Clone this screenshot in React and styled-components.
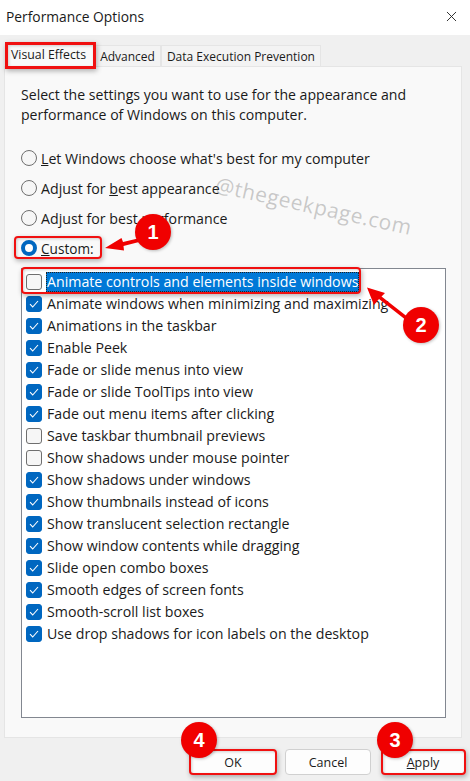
import styled, { createGlobalStyle } from "styled-components";
import { X } from "lucide-react";

const GlobalStyle = createGlobalStyle`
	html, body {
		margin: 0;
		padding: 0;
		background: #f0f0f0;
	}
	* {
		box-sizing: border-box;
	}
`;

const options = [
	{ label: "Animate controls and elements inside windows", checked: false, selected: true },
	{ label: "Animate windows when minimizing and maximizing", checked: true },
	{ label: "Animations in the taskbar", checked: true },
	{ label: "Enable Peek", checked: true },
	{ label: "Fade or slide menus into view", checked: true },
	{ label: "Fade or slide ToolTips into view", checked: true },
	{ label: "Fade out menu items after clicking", checked: true },
	{ label: "Save taskbar thumbnail previews", checked: false },
	{ label: "Show shadows under mouse pointer", checked: false },
	{ label: "Show shadows under windows", checked: true },
	{ label: "Show thumbnails instead of icons", checked: true },
	{ label: "Show translucent selection rectangle", checked: true },
	{ label: "Show window contents while dragging", checked: true },
	{ label: "Slide open combo boxes", checked: true },
	{ label: "Smooth edges of screen fonts", checked: true },
	{ label: "Smooth-scroll list boxes", checked: true },
	{ label: "Use drop shadows for icon labels on the desktop", checked: true },
];

const App = () => {
	return (
		<Dialog>
			<GlobalStyle />
			<TitleBar>
				<Title>Performance Options</Title>
				<X size={17} strokeWidth={1.3} color="#222" />
			</TitleBar>
			<Body>
				<Tabs>
					<Tab $active>Visual Effects</Tab>
					<Tab>Advanced</Tab>
					<Tab>Data Execution Prevention</Tab>
				</Tabs>
				<Panel>
					<Intro>
						Select the settings you want to use for the appearance and
						performance of Windows on this computer.
					</Intro>
					<Radios>
						<RadioRow>
							<Radio />
							<span><u>L</u>et Windows choose what's best for my computer</span>
						</RadioRow>
						<RadioRow>
							<Radio />
							<span>Adjust for <u>b</u>est appearance</span>
						</RadioRow>
						<RadioRow>
							<Radio />
							<span>Adjust for best <u>p</u>erformance</span>
						</RadioRow>
						<RadioRow>
							<Radio $on />
							<CustomLabel><u>C</u>ustom:</CustomLabel>
						</RadioRow>
					</Radios>
					<List>
						{options.map((o) => (
							<Row key={o.label}>
								<Check $on={o.checked}>
									{o.checked && (
										<svg width="10" height="8" viewBox="0 0 10 8">
											<path d="M1 4.2 3.7 7 9 1" fill="none" stroke="#fff" strokeWidth="1.1" />
										</svg>
									)}
								</Check>
								<RowLabel $selected={o.selected}>{o.label}</RowLabel>
							</Row>
						))}
					</List>
				</Panel>
				<Footer>
					<Button $width={88}>OK</Button>
					<Button $width={86}>Cancel</Button>
					<Button $width={84} $last><u>A</u>pply</Button>
				</Footer>
			</Body>

			<Watermark>@thegeekpage.com</Watermark>

			<Highlight style={{ left: 5, top: 42, width: 91, height: 27 }} $square />
			<Highlight style={{ left: 14, top: 236, width: 88, height: 23 }} />
			<Highlight style={{ left: 21, top: 267, width: 340, height: 27 }} />
			<Highlight style={{ left: 189, top: 749, width: 88, height: 26 }} />
			<Highlight style={{ left: 381, top: 749, width: 85, height: 26 }} />

			<Arrows width="470" height="781" viewBox="0 0 470 781">
				<path d="M105 248 121.5 238 123 242 140 238 141 241.5 123.5 246 124 250.5Z" fill="#f00000" />
				<path d="M367 287.5 385 293 381.5 296.5 409 318 406.5 320.5 379 299 374 305Z" fill="#f00000" />
			</Arrows>

			<Badge style={{ left: 135, top: 214 }}>1</Badge>
			<Badge style={{ left: 403, top: 307 }}>2</Badge>
			<Badge style={{ left: 377, top: 722 }}>3</Badge>
			<Badge style={{ left: 181, top: 722 }}>4</Badge>
		</Dialog>
	);
};

const Dialog = styled.div`
	position: relative;
	width: 470px;
	height: 781px;
	overflow: hidden;
	background: #f0f0f0;
	font-family: "Open Sans", "Noto Sans", sans-serif;
	font-size: 14.2px;
	color: #1a1a1a;
`;

const TitleBar = styled.div`
	height: 35px;
	background: #fff;
	display: flex;
	align-items: center;
	justify-content: space-between;
	padding: 0 10px 3px 6px;
`;

const Title = styled.div`
	font-size: 13.8px;
`;

const Body = styled.div`
	padding: 10px 8px 0 4px;
`;

const Tabs = styled.div`
	display: flex;
	align-items: flex-end;
	height: 21px;
	padding-left: 1px;
`;

const Tab = styled.div`
	height: ${(p) => (p.$active ? "23px" : "21px")};
	padding: ${(p) => (p.$active ? "0 7px 3px 5px" : "0 5px")};
	margin-bottom: ${(p) => (p.$active ? "-1px" : "0")};
	display: flex;
	align-items: center;
	font-size: ${(p) => (p.$active ? "12.3px" : "12px")};
	white-space: nowrap;
	background: ${(p) => (p.$active ? "#f9f9f9" : "#f3f3f3")};
	border: 1px solid #e5e5e5;
	border-bottom: none;
`;

const Panel = styled.div`
	height: 672px;
	background: #f9f9f9;
	border: 1px solid #e5e5e5;
	padding: 18px 15px 0 16px;
`;

const Intro = styled.p`
	margin: 0;
	width: 410px;
	font-size: 14.1px;
	line-height: 20px;
`;

const Radios = styled.div`
	margin-top: 22px;
	display: flex;
	flex-direction: column;
	gap: 8px;
`;

const RadioRow = styled.div`
	height: 22px;
	display: flex;
	align-items: center;
	gap: 4px;
`;

const CustomLabel = styled.span`
	font-size: 13.6px;
`;

const Radio = styled.span`
	width: 16px;
	height: 16px;
	flex: none;
	border-radius: 50%;
	background: ${(p) => (p.$on ? "#fff" : "#f6f6f6")};
	border: ${(p) => (p.$on ? "4.5px solid #0067c0" : "1px solid #6f6f6f")};
`;

const List = styled.div`
	margin-top: 9px;
	height: 450px;
	background: #fff;
	border: 1px solid #828790;
	padding: 2px 0 0 4px;
`;

const Row = styled.div`
	height: 22px;
	display: flex;
	align-items: center;
	gap: 4px;
`;

const Check = styled.span`
	width: 16px;
	height: 16px;
	flex: none;
	border-radius: 3px;
	display: flex;
	align-items: center;
	justify-content: center;
	background: ${(p) => (p.$on ? "#0067c0" : "#f6f6f6")};
	border: 1px solid ${(p) => (p.$on ? "#0067c0" : "#6f6f6f")};
`;

const RowLabel = styled.span`
	padding: 0 1px;
	line-height: 20px;
	white-space: nowrap;
	background: ${(p) => (p.$selected ? "#0078d7" : "transparent")};
	color: ${(p) => (p.$selected ? "#fff" : "inherit")};
	outline: ${(p) => (p.$selected ? "1px dotted #222" : "none")};
	outline-offset: -1px;
`;

const Footer = styled.div`
	display: flex;
	justify-content: flex-end;
	gap: 8px;
	margin-top: 11px;
	margin-right: -3px;
`;

const Button = styled.div`
	width: ${(p) => p.$width}px;
	height: 26px;
	margin-left: ${(p) => (p.$last ? "2px" : "0")};
	display: flex;
	align-items: center;
	justify-content: center;
	font-size: 12.5px;
	background: #fdfdfd;
	border: 1px solid #d0d0d0;
	border-radius: 4px;
`;

const Watermark = styled.div`
	position: absolute;
	left: 216px;
	top: 170px;
	font-size: 21px;
	letter-spacing: 0.5px;
	color: rgba(120, 120, 120, 0.38);
	white-space: nowrap;
	transform: rotate(12.5deg);
	transform-origin: left center;
`;

const Highlight = styled.div`
	position: absolute;
	border: ${(p) => (p.$square ? "3px" : "2px")} solid #f01010;
	border-radius: ${(p) => (p.$square ? "0" : "4px")};
	box-shadow: 1px 2px 5px rgba(0, 0, 0, 0.3), inset 1px 1px 3px rgba(0, 0, 0, 0.18);
`;

const Arrows = styled.svg`
	position: absolute;
	left: 0;
	top: 0;
	pointer-events: none;
`;

const Badge = styled.div`
	position: absolute;
	width: 36px;
	height: 36px;
	border-radius: 50%;
	background: #f00000;
	color: #fff;
	font-family: "Liberation Sans", Arial, sans-serif;
	font-size: 20px;
	font-weight: 700;
	display: flex;
	align-items: center;
	justify-content: center;
	box-shadow: 1px 1px 3px rgba(0, 0, 0, 0.25);
`;

export default App;
